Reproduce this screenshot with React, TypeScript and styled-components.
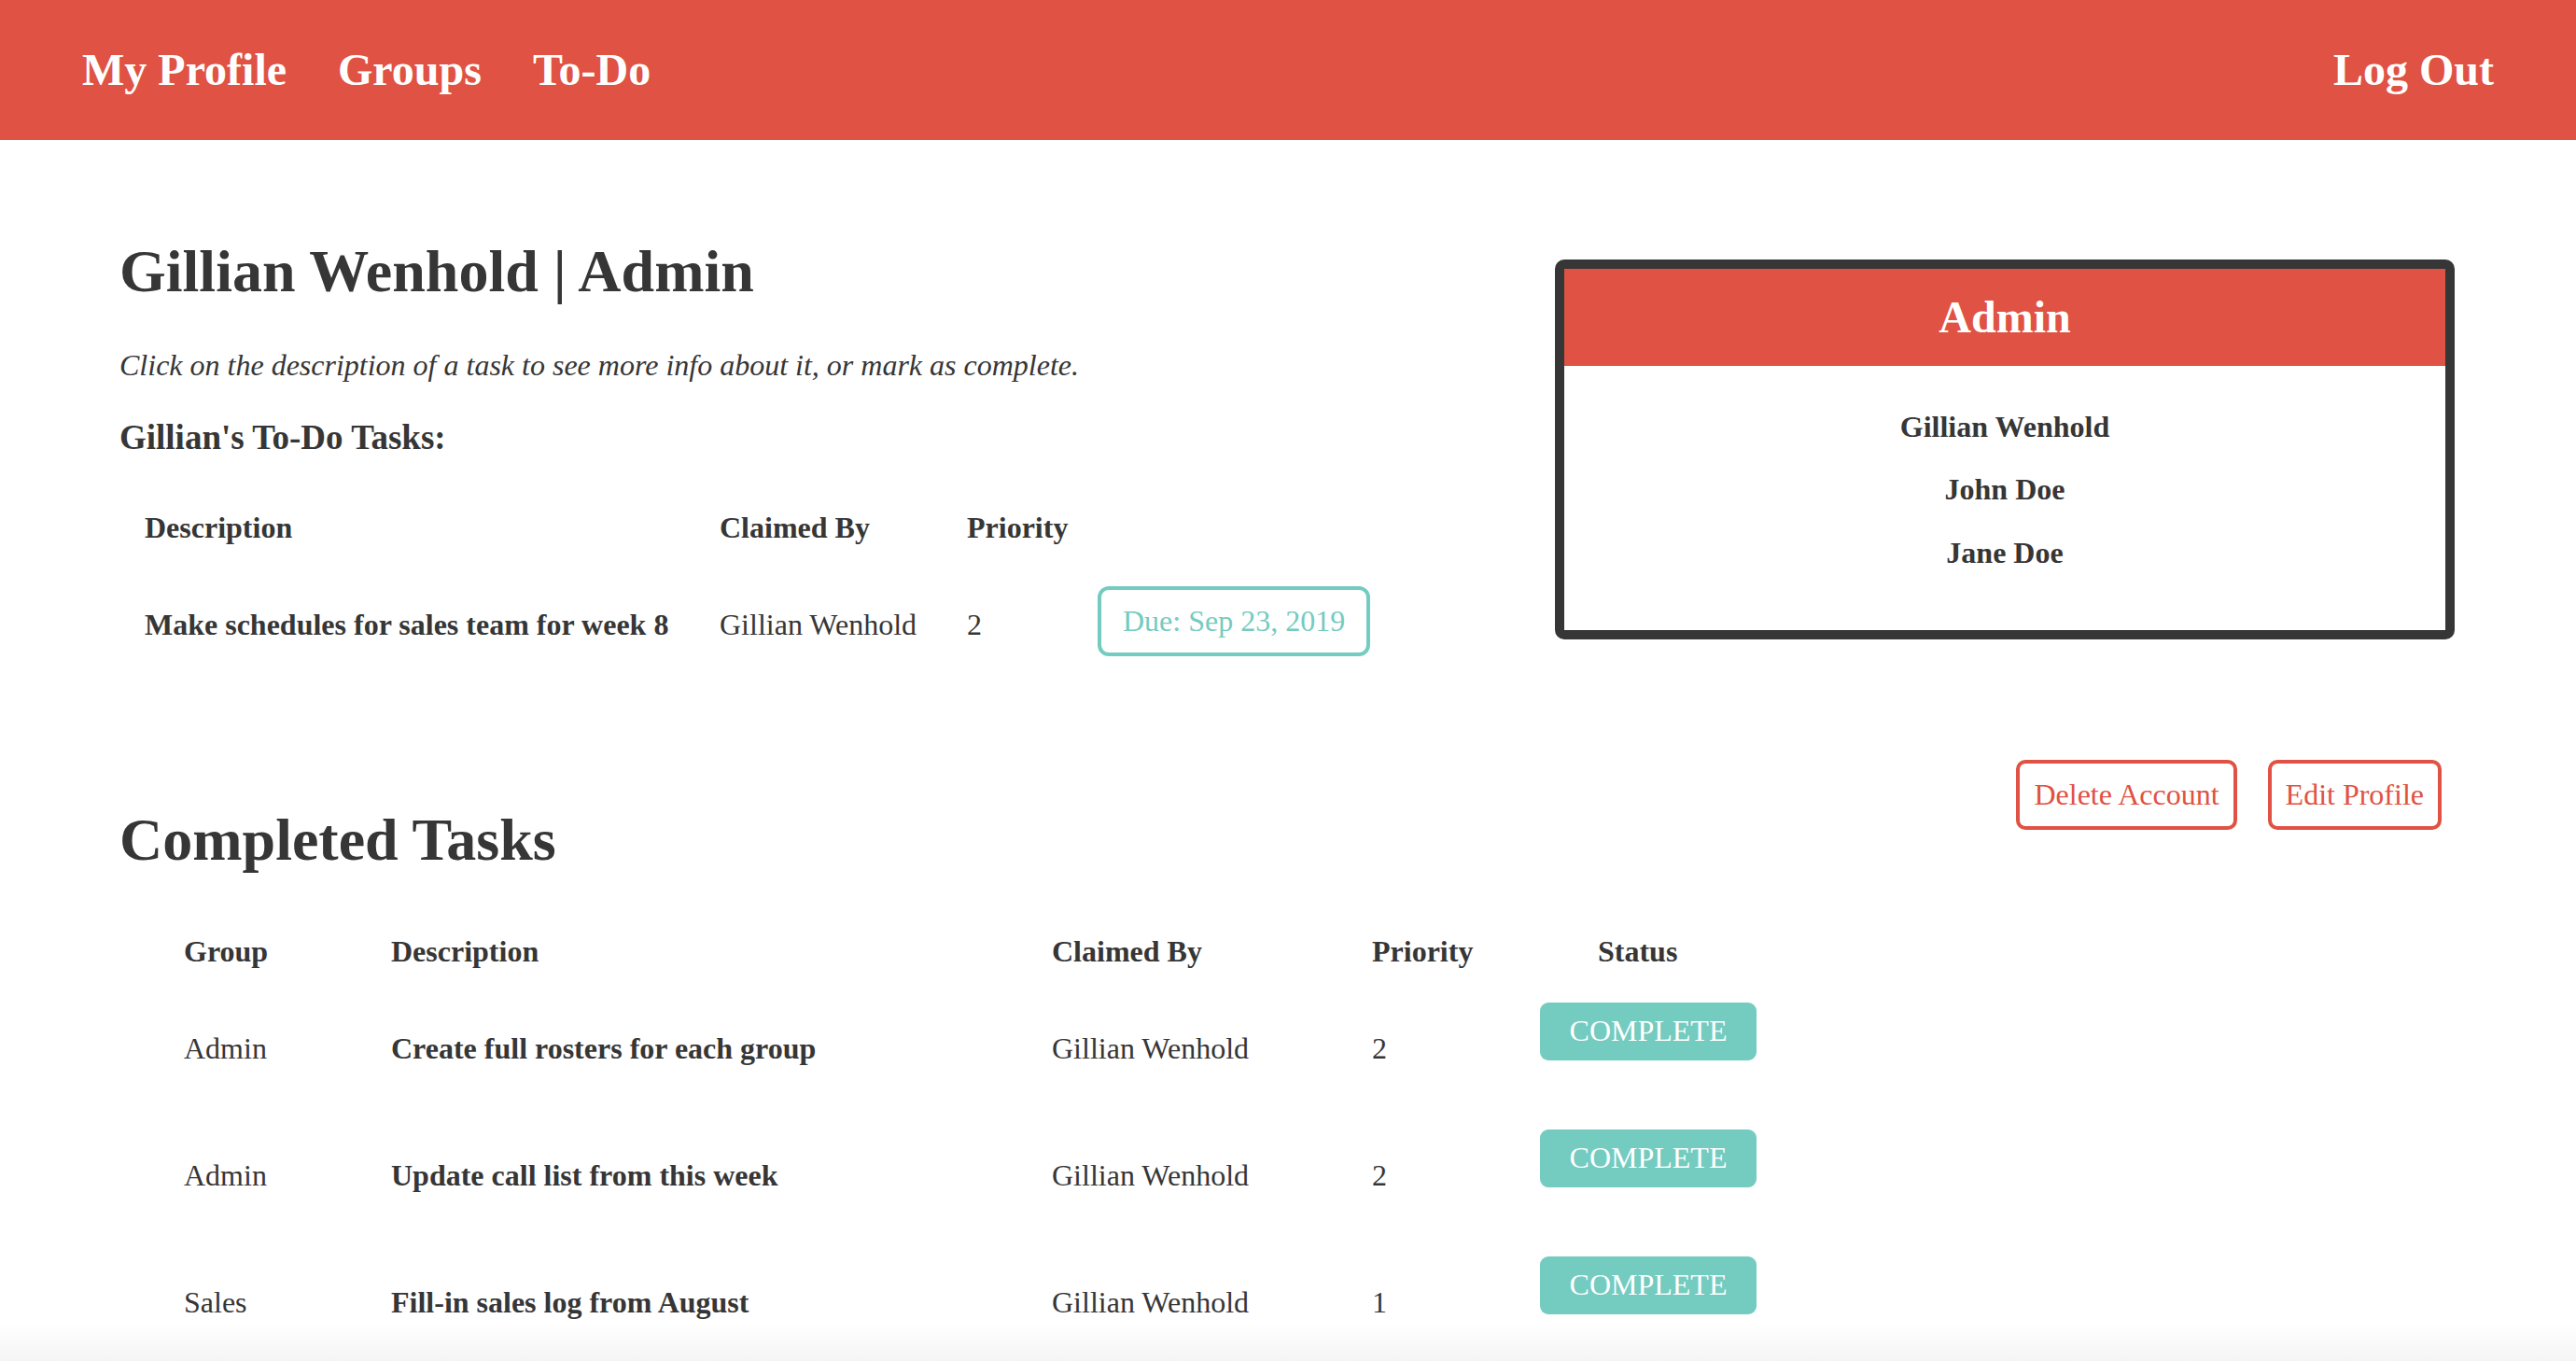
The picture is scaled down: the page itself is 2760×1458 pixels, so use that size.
import React from "react";
import styled, { createGlobalStyle } from "styled-components";

const RED = "#e05243";
const TEAL = "#74cbc0";
const INK = "#363636";

const GlobalStyle = createGlobalStyle`
  html, body {
    margin: 0;
    padding: 0;
    background: #ffffff;
  }
  body {
    font-family: "Liberation Serif", "Times New Roman", serif;
    color: ${INK};
  }
  body::after {
    content: "";
    position: fixed;
    left: 0;
    right: 0;
    bottom: 0;
    height: 40px;
    pointer-events: none;
    background: linear-gradient(to bottom, rgba(240, 240, 240, 0), rgba(240, 240, 240, 0.7));
  }
  * { box-sizing: border-box; }
`;

const NavBar = styled.header`
  height: 150px;
  background: ${RED};
  display: flex;
  align-items: center;
  justify-content: space-between;
  padding: 0 88px 0 88px;
`;

const NavGroup = styled.nav`
  display: flex;
  align-items: center;
  gap: 55px;
`;

const NavLink = styled.a`
  color: #ffffff;
  font-weight: 700;
  font-size: 48px;
  line-height: 1.2;
  text-decoration: none;
  cursor: pointer;
`;

const Main = styled.main`
  padding: 103px 130px 0 128px;
  display: flex;
  flex-direction: column;
`;

const TopSection = styled.section`
  display: grid;
  grid-template-columns: 1fr 964px;
  align-items: start;
`;

const InfoColumn = styled.div`
  display: flex;
  flex-direction: column;
`;

const Title = styled.h1<{ $top?: number }>`
  margin: ${(p) => p.$top ?? 0}px 0 0 0;
  font-size: 64px;
  line-height: 1.2;
  font-weight: 700;
  color: ${INK};
`;

const Hint = styled.p`
  margin: 42px 0 0 0;
  font-size: 32px;
  line-height: 1.2;
  font-style: italic;
`;

const Subtitle = styled.h3`
  margin: 37px 0 0 0;
  font-size: 37px;
  line-height: 1.2;
  font-weight: 700;
`;

const TaskRow = styled.div<{ $cols: string; $inset: number; $top: number; $min?: number }>`
  display: grid;
  grid-template-columns: ${(p) => p.$cols};
  align-items: start;
  padding-left: ${(p) => p.$inset}px;
  margin-top: ${(p) => p.$top}px;
  min-height: ${(p) => p.$min ?? 0}px;
`;

const HeaderCell = styled.div<{ $indent?: number }>`
  font-size: 32px;
  line-height: 1.2;
  font-weight: 700;
  padding-left: ${(p) => p.$indent ?? 0}px;
`;

const Cell = styled.div<{ $bold?: boolean; $drop: number }>`
  font-size: 32px;
  line-height: 1.2;
  font-weight: ${(p) => (p.$bold ? 700 : 400)};
  padding-top: ${(p) => p.$drop}px;
`;

const DueBadge = styled.div`
  justify-self: start;
  height: 75px;
  display: flex;
  align-items: center;
  padding: 0 23px;
  border: 4px solid ${TEAL};
  border-radius: 12px;
  color: ${TEAL};
  font-size: 32px;
  line-height: 1.2;
  white-space: nowrap;
`;

const Sidebar = styled.aside`
  margin-top: 25px;
`;

const GroupCard = styled.div`
  border: 10px solid ${INK};
  border-radius: 10px;
  background: #ffffff;
  overflow: hidden;
`;

const CardHeader = styled.h2`
  margin: 0;
  height: 104px;
  background: ${RED};
  color: #ffffff;
  font-size: 48px;
  line-height: 1.2;
  font-weight: 700;
  display: flex;
  align-items: center;
  justify-content: center;
`;

const MemberList = styled.ul`
  list-style: none;
  margin: 0;
  padding: 46px 0 64px 0;
  display: flex;
  flex-direction: column;
  align-items: center;
  gap: 29px;
`;

const Member = styled.li`
  font-size: 32px;
  line-height: 1.2;
  font-weight: 700;
`;

const CompletedHeader = styled.div`
  margin-top: 111px;
  display: flex;
  justify-content: space-between;
  align-items: flex-start;
`;

const ActionBar = styled.div`
  display: flex;
  gap: 33px;
  padding-right: 14px;
`;

const OutlineButton = styled.button`
  height: 75px;
  padding: 0 15px;
  background: #ffffff;
  border: 4px solid ${RED};
  border-radius: 10px;
  color: ${RED};
  font-family: "Liberation Serif", "Times New Roman", serif;
  font-size: 32px;
  line-height: 1.2;
  cursor: pointer;
`;

const StatusButton = styled.button`
  justify-self: start;
  width: 232px;
  height: 62px;
  border: none;
  border-radius: 9px;
  background: ${TEAL};
  color: #ffffff;
  font-family: "Liberation Serif", "Times New Roman", serif;
  font-size: 32px;
  line-height: 1.2;
  padding: 0 0 2px 0;
  cursor: pointer;
`;

const todoCols = "616px 265px 140px auto";
const doneCols = "222px 708px 343px 180px auto";

const completed = [
  { group: "Admin", desc: "Create full rosters for each group", by: "Gillian Wenhold", pr: 2 },
  { group: "Admin", desc: "Update call list from this week", by: "Gillian Wenhold", pr: 2 },
  { group: "Sales", desc: "Fill-in sales log from August", by: "Gillian Wenhold", pr: 1 },
];

export default function App() {
  return (
    <>
      <GlobalStyle />
      <NavBar>
        <NavGroup>
          <NavLink>My Profile</NavLink>
          <NavLink>Groups</NavLink>
          <NavLink>To-Do</NavLink>
        </NavGroup>
        <NavLink>Log Out</NavLink>
      </NavBar>
      <Main>
        <TopSection>
          <InfoColumn>
            <Title>Gillian Wenhold | Admin</Title>
            <Hint>Click on the description of a task to see more info about it, or mark as complete.</Hint>
            <Subtitle>Gillian's To-Do Tasks:</Subtitle>
            <TaskRow $cols={todoCols} $inset={27} $top={54}>
              <HeaderCell>Description</HeaderCell>
              <HeaderCell>Claimed By</HeaderCell>
              <HeaderCell>Priority</HeaderCell>
              <div />
            </TaskRow>
            <TaskRow $cols={todoCols} $inset={27} $top={44}>
              <Cell $bold $drop={22}>Make schedules for sales team for week 8</Cell>
              <Cell $drop={22}>Gillian Wenhold</Cell>
              <Cell $drop={22}>2</Cell>
              <DueBadge>Due: Sep 23, 2019</DueBadge>
            </TaskRow>
          </InfoColumn>
          <Sidebar>
            <GroupCard>
              <CardHeader>Admin</CardHeader>
              <MemberList>
                <Member>Gillian Wenhold</Member>
                <Member>John Doe</Member>
                <Member>Jane Doe</Member>
              </MemberList>
            </GroupCard>
          </Sidebar>
        </TopSection>

        <CompletedHeader>
          <Title $top={48}>Completed Tasks</Title>
          <ActionBar>
            <OutlineButton>Delete Account</OutlineButton>
            <OutlineButton>Edit Profile</OutlineButton>
          </ActionBar>
        </CompletedHeader>

        <TaskRow $cols={doneCols} $inset={69} $top={61}>
          <HeaderCell>Group</HeaderCell>
          <HeaderCell>Description</HeaderCell>
          <HeaderCell>Claimed By</HeaderCell>
          <HeaderCell>Priority</HeaderCell>
          <HeaderCell $indent={62}>Status</HeaderCell>
        </TaskRow>
        {completed.map((t, i) => (
          <TaskRow key={i} $cols={doneCols} $inset={69} $top={i === 0 ? 36 : 0} $min={136}>
            <Cell $drop={30}>{t.group}</Cell>
            <Cell $bold $drop={30}>{t.desc}</Cell>
            <Cell $drop={30}>{t.by}</Cell>
            <Cell $drop={30}>{t.pr}</Cell>
            <StatusButton>COMPLETE</StatusButton>
          </TaskRow>
        ))}
      </Main>
    </>
  );
}
